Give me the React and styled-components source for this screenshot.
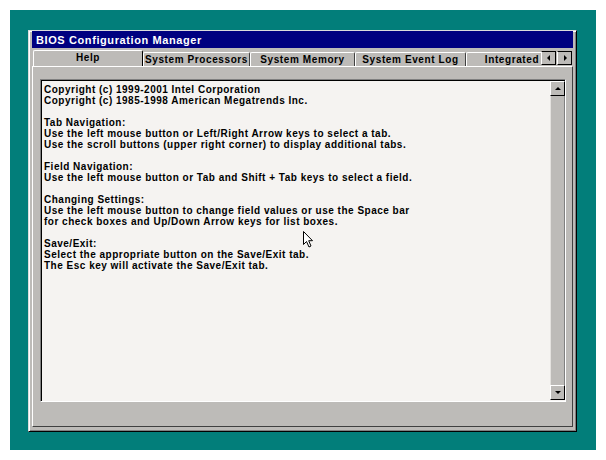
import React from "react";
import styled, { createGlobalStyle } from "styled-components";

const Global = createGlobalStyle`
  html, body { margin: 0; padding: 0; background: #ffffff; }
  body { font-family: "Liberation Sans", Arial, sans-serif; }
`;

const GRAY = "#bdbbb8";

const Desktop = styled.div`
  position: relative;
  margin: 10px;
  width: 586px;
  height: 440px;
  box-sizing: border-box;
  padding: 20px 0 0 18px;
  background: #027e7a;
`;

const Window = styled.div`
  width: 549px;
  height: 402px;
  box-sizing: border-box;
  display: flex;
  flex-direction: column;
  background: ${GRAY};
  border-top: 1px solid #dcdcdc;
  border-left: 1px solid #dcdcdc;
  border-right: 1px solid #000;
  border-bottom: 1px solid #000;
  box-shadow: inset 1px 1px #ffffff, inset -1px -1px #808080;
  padding: 0 3px 4px 3px;
`;

const TitleBar = styled.div`
  height: 17px;
  background: #000080;
  color: #ffffff;
  font-weight: bold;
  font-size: 11px;
  letter-spacing: 0.6px;
  line-height: 18px;
  padding-left: 4px;
  white-space: nowrap;
`;

const TabStrip = styled.div`
  height: 18px;
  display: flex;
  align-items: flex-end;
  padding-left: 1px;
  position: relative;
  z-index: 1;
`;

const TabsViewport = styled.div`
  display: flex;
  align-items: flex-end;
  width: 508px;
  overflow: hidden;
  height: 18px;
`;

const Tab = styled.div`
  flex: none;
  box-sizing: border-box;
  width: ${(p) => p.$w}px;
  height: ${(p) => (p.$active ? 17 : 14)}px;
  margin-bottom: ${(p) => (p.$active ? -1 : 0)}px;
  background: ${GRAY};
  border-top: 1px solid #ffffff;
  border-left: 1px solid #ffffff;
  border-right: 1px solid ${(p) => (p.$active ? "#000" : "#404040")};
  border-top-left-radius: 2px;
  border-top-right-radius: 2px;
  font-weight: bold;
  font-size: 10px;
  letter-spacing: 0.6px;
  line-height: ${(p) => (p.$active ? 14 : 13)}px;
  text-align: center;
  white-space: nowrap;
  color: #000;
`;

const ScrollButtons = styled.div`
  display: flex;
  gap: 1px;
  margin-bottom: 1px;
`;

const ArrowButton = styled.div`
  width: 15px;
  height: 14px;
  box-sizing: border-box;
  background: ${GRAY};
  border-top: 1px solid #000;
  border-left: 1px solid #ffffff;
  border-right: 1px solid #000;
  border-bottom: 1px solid #000;
  display: flex;
  align-items: center;
  justify-content: center;
`;

const TabPage = styled.div`
  flex: 1;
  display: flex;
  box-sizing: border-box;
  border-top: 1px solid #ffffff;
  border-left: 1px solid #ffffff;
  border-right: 1px solid #404040;
  border-bottom: 1px solid #404040;
  padding: 12px 6px 24px 7px;
`;

const Panel = styled.div`
  flex: 1;
  display: flex;
  box-sizing: border-box;
  background: #f5f3f1;
  border-top: 1px solid #808080;
  border-left: 1px solid #808080;
  border-right: 1px solid #ffffff;
  border-bottom: 1px solid #ffffff;
  box-shadow: inset 1px 1px #000;
`;

const TextArea = styled.div`
  flex: 1;
  padding: 4px 0 0 3px;
  font-weight: bold;
  font-size: 10px;
  letter-spacing: 0.5px;
  line-height: 11px;
  color: #000;
  white-space: pre;
`;

const Line = styled.div`
  height: 11px;
`;

const Scrollbar = styled.div`
  width: 15px;
  margin: 1px 0 1px 0;
  display: flex;
  flex-direction: column;
`;

const ScrollBtn = styled.div`
  width: 15px;
  height: 15px;
  box-sizing: border-box;
  background: ${GRAY};
  border-top: 1px solid #ffffff;
  border-left: 1px solid #ffffff;
  border-right: 1px solid #000;
  border-bottom: 1px solid #000;
  display: flex;
  align-items: center;
  justify-content: center;
`;

const Track = styled.div`
  flex: 1;
  background: ${GRAY};
  border-left: 1px solid #e4e2df;
  border-right: 1px solid #808080;
`;

const Cursor = styled.svg`
  position: absolute;
  left: 292px;
  top: 220px;
`;

const Tri = ({ dir }) => {
  const pts = {
    up: "1,5 4,2 7,5",
    down: "1,2 4,5 7,2",
    left: "5,1 2,4 5,7",
    right: "3,1 6,4 3,7",
  }[dir];
  return (
    <svg width="8" height="8" viewBox="0 0 8 8">
      <polygon points={pts} fill="#000" />
    </svg>
  );
};

const lines = [
  "Copyright (c) 1999-2001 Intel Corporation",
  "Copyright (c) 1985-1998 American Megatrends Inc.",
  "",
  "Tab Navigation:",
  "Use the left mouse button or Left/Right Arrow keys to select a tab.",
  "Use the scroll buttons (upper right corner) to display additional tabs.",
  "",
  "Field Navigation:",
  "Use the left mouse button or Tab and Shift + Tab keys to select a field.",
  "",
  "Changing Settings:",
  "Use the left mouse button to change field values or use the Space bar",
  "for check boxes and Up/Down Arrow keys for list boxes.",
  "",
  "Save/Exit:",
  "Select the appropriate button on the Save/Exit tab.",
  "The Esc key will activate the Save/Exit tab.",
];

const tabs = [
  { label: "Help", w: 110, active: true },
  { label: "System Processors", w: 107 },
  { label: "System Memory", w: 105 },
  { label: "System Event Log", w: 111 },
  { label: "Integrated", w: 92 },
];

export default function App() {
  return (
    <>
      <Global />
      <Desktop>
        <Window>
          <TitleBar>BIOS Configuration Manager</TitleBar>
          <TabStrip>
            <TabsViewport>
              {tabs.map((t) => (
                <Tab key={t.label} $w={t.w} $active={t.active}>
                  {t.label}
                </Tab>
              ))}
            </TabsViewport>
            <ScrollButtons>
              <ArrowButton><Tri dir="left" /></ArrowButton>
              <ArrowButton><Tri dir="right" /></ArrowButton>
            </ScrollButtons>
          </TabStrip>
          <TabPage>
            <Panel>
              <TextArea>
                {lines.map((l, i) => (
                  <Line key={i}>{l}</Line>
                ))}
              </TextArea>
              <Scrollbar>
                <ScrollBtn><Tri dir="up" /></ScrollBtn>
                <Track />
                <ScrollBtn><Tri dir="down" /></ScrollBtn>
              </Scrollbar>
            </Panel>
          </TabPage>
        </Window>
        <Cursor width="13" height="19" viewBox="0 0 13 19">
          <path
            d="M1.5 1.5 L1.5 14.5 L4.5 11.5 L7 17 L9 16 L6.7 10.7 L10.5 10.7 Z"
            fill="#fff"
            stroke="#000"
            strokeWidth="1"
          />
        </Cursor>
      </Desktop>
    </>
  );
}
